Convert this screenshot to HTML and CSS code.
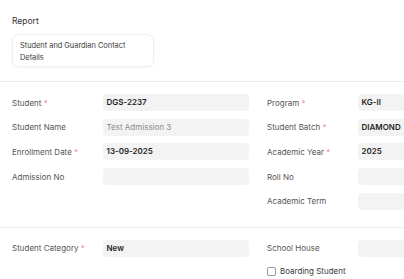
FILE: index.html
```html
<!DOCTYPE html>
<html lang="en">
<head>
    <meta charset="UTF-8">
    <meta name="viewport" content="width=device-width, initial-scale=1.0">
    <title>Student Report</title>
    <link rel="stylesheet" href="styles.css">
</head>
<body>

<div class="page">
    <!-- Report selector -->
    <div class="section report-section">
        <div class="report-label">Report</div>
        <div class="report-box">Student and Guardian Contact Details</div>
    </div>

    <!-- Student details -->
    <div class="section">
        <div class="columns">
            <div class="column">
                <div class="field">
                    <label>Student <span class="req">*</span></label>
                    <div class="input bold">DGS-2237</div>
                </div>
                <div class="field">
                    <label>Student Name</label>
                    <div class="input muted">Test Admission 3</div>
                </div>
                <div class="field">
                    <label>Enrollment Date <span class="req">*</span></label>
                    <div class="input bold">13-09-2025</div>
                </div>
                <div class="field">
                    <label>Admission No</label>
                    <div class="input"></div>
                </div>
            </div>
            <div class="column">
                <div class="field">
                    <label>Program <span class="req">*</span></label>
                    <div class="input bold">KG-II</div>
                </div>
                <div class="field">
                    <label>Student Batch <span class="req">*</span></label>
                    <div class="input bold">DIAMOND</div>
                </div>
                <div class="field">
                    <label>Academic Year <span class="req">*</span></label>
                    <div class="input bold">2025</div>
                </div>
                <div class="field">
                    <label>Roll No</label>
                    <div class="input"></div>
                </div>
                <div class="field">
                    <label>Academic Term</label>
                    <div class="input"></div>
                </div>
            </div>
        </div>
    </div>

    <!-- Category -->
    <div class="section last">
        <div class="columns">
            <div class="column">
                <div class="field">
                    <label>Student Category <span class="req">*</span></label>
                    <div class="input bold">New</div>
                </div>
            </div>
            <div class="column">
                <div class="field">
                    <label>School House</label>
                    <div class="input"></div>
                </div>
                <div class="check">
                    <span class="box"></span>
                    <span>Boarding Student</span>
                </div>
            </div>
        </div>
    </div>
</div>

</body>
</html>
```

FILE: styles.css
```css
body {
    margin: 0;
    padding: 0;
    background-color: #fff;
    color: #383838;
    font-family: 'Inter', 'Noto Sans', sans-serif;
    font-size: 8px;
    overflow: hidden;
}
.page {
    width: 516px;
}
.section {
    padding: 12px 12px 17px;
    border-bottom: 1px solid #ededed;
}
.section.last {
    border-bottom: none;
}
.report-section {
    padding: 15px 12px 14px;
}
.report-label {
    line-height: 12px;
    font-size: 8.5px;
    color: #333;
    margin-bottom: 7px;
}
.report-box {
    width: 142px;
    height: 33px;
    box-sizing: border-box;
    padding: 5px 7px;
    font-size: 7.4px;
    line-height: 12px;
    border: 1px solid #efefef;
    border-radius: 6px;
    box-shadow: 0 1px 2px rgba(0, 0, 0, 0.04);
    color: #3a3a3a;
}
.columns {
    display: grid;
    grid-template-columns: 237px 237px;
    column-gap: 18px;
}
.column {
    display: flex;
    flex-direction: column;
    gap: 7.7px;
}
.field {
    display: grid;
    grid-template-columns: 90.5px 146.5px;
    align-items: center;
}
.field label {
    color: #555;
}
.req {
    color: #f08a9a;
}
.input {
    height: 17px;
    line-height: 17px;
    padding: 0 4px;
    background-color: #f3f3f3;
    border-radius: 4px;
    color: #1f1f1f;
    white-space: nowrap;
    overflow: hidden;
}
.input.bold {
    font-weight: 600;
}
.input.muted {
    color: #8a8a8a;
}
.check {
    display: flex;
    align-items: center;
    gap: 4px;
    margin-top: 2px;
    color: #383838;
}
.check .box {
    width: 7px;
    height: 7px;
    border: 1px solid #9a9a9a;
    border-radius: 2px;
}
```
